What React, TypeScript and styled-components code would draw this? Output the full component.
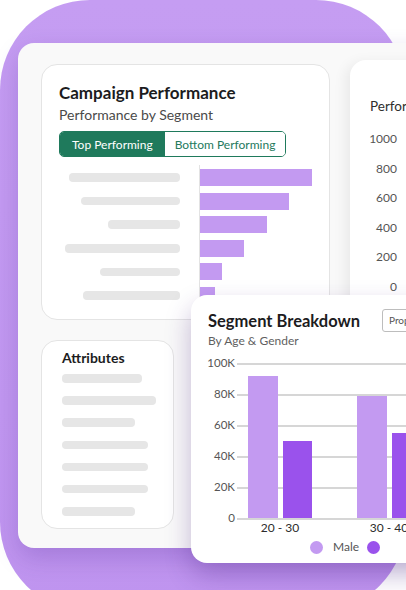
import React from 'react';
import styled, { createGlobalStyle } from 'styled-components';

const GlobalStyle = createGlobalStyle`
  html, body {
    margin: 0;
    padding: 0;
    background: #ffffff;
    overflow: hidden;
  }
  body {
    width: 406px;
    height: 590px;
    font-family: Lato, "Noto Sans", sans-serif;
    color: #1d1d1f;
  }
`;

const topRows = [
  { label: 111, bar: 112 },
  { label: 99, bar: 89 },
  { label: 72, bar: 67 },
  { label: 115, bar: 44 },
  { label: 80, bar: 22 },
  { label: 97, bar: 15 },
];

const attributeLines = [80, 94, 73, 86, 86, 86, 73];

const perfTicks = ['1000', '800', '600', '400', '200', '0'];
const segTicks = ['100K', '80K', '60K', '40K', '20K', '0'];

const groups = [
  { label: '20 - 30', male: 91.5, female: 50 },
  { label: '30 - 40', male: 79, female: 55 },
];

export default function App() {
  return (
    <>
      <GlobalStyle />
      <Backdrop>
        <Board>
          <LeftColumn>
            <CampaignCard>
              <CardTitle>Campaign Performance</CardTitle>
              <CardSubtitle>Performance by Segment</CardSubtitle>
              <Toggle>
                <ToggleOption $active>Top Performing</ToggleOption>
                <ToggleOption>Bottom Performing</ToggleOption>
              </Toggle>
              <RankChart>
                <LabelColumn>
                  {topRows.map((r, i) => (
                    <RankSlot key={i}>
                      <Placeholder style={{ width: r.label }} />
                    </RankSlot>
                  ))}
                </LabelColumn>
                <BarColumn>
                  {topRows.map((r, i) => (
                    <RankBar key={i} style={{ width: r.bar }} />
                  ))}
                </BarColumn>
              </RankChart>
            </CampaignCard>

            <AttributesCard>
              <AttributesTitle>Attributes</AttributesTitle>
              <AttributeList>
                {attributeLines.map((w, i) => (
                  <Placeholder key={i} style={{ width: w }} />
                ))}
              </AttributeList>
            </AttributesCard>
          </LeftColumn>

          <SidePanel>
            <SideTitle>Performance</SideTitle>
            <SideAxis>
              {perfTicks.map((t) => (
                <SideTick key={t}>{t}</SideTick>
              ))}
            </SideAxis>
          </SidePanel>
        </Board>

        <SegmentCard>
          <SegmentHeader>
            <SegmentTitle>Segment Breakdown</SegmentTitle>
            <Dropdown>Property</Dropdown>
          </SegmentHeader>
          <SegmentSubtitle>By Age &amp; Gender</SegmentSubtitle>

          <PlotRow>
            <YAxis>
              {segTicks.map((t) => (
                <YTick key={t}>{t}</YTick>
              ))}
            </YAxis>
            <Plot>
              {groups.map((g) => (
                <BarGroup key={g.label}>
                  <ColumnBar $tone="light" style={{ height: g.male * 1.55 }} />
                  <ColumnBar $tone="dark" style={{ height: g.female * 1.55 }} />
                </BarGroup>
              ))}
            </Plot>
          </PlotRow>

          <XAxis>
            {groups.map((g) => (
              <XTick key={g.label}>{g.label}</XTick>
            ))}
          </XAxis>

          {/* second label sits past the frame edge in the mock */}
          <Legend>
            <LegendDot $tone="light" />
            <LegendText>Male</LegendText>
            <LegendDot $tone="dark" />
          </Legend>
        </SegmentCard>
      </Backdrop>
    </>
  );
}

const LIGHT = '#c39af1';
const DARK = '#9a52ec';

const Backdrop = styled.div`
  position: relative;
  box-sizing: border-box;
  width: 406px;
  height: 612px;
  padding: 43px 0 0 18px;
  border-radius: 90px;
  background: linear-gradient(180deg, #c59df2 0%, #bf94ef 100%);
`

const Board = styled.div`
  box-sizing: border-box;
  display: flex;
  gap: 20px;
  width: 440px;
  height: 505px;
  padding: 21px 0 0 23px;
  border-radius: 16px;
  background: #f9f9f9;
  box-shadow: 0 10px 24px rgba(70, 30, 140, 0.22);
`

const LeftColumn = styled.div`
  display: flex;
  flex-direction: column;
  gap: 20px;
  flex: none;
  width: 289px;
`

const CampaignCard = styled.div`
  box-sizing: border-box;
  height: 256px;
  padding: 18px 17px 0 17px;
  border: 1px solid #e4e4e4;
  border-radius: 16px;
  background: #ffffff;
`

const CardTitle = styled.h2`
  margin: 0;
  font-size: 17px;
  line-height: 20px;
  font-weight: 700;
  color: #1c1c1e;
`

const CardSubtitle = styled.div`
  margin-top: 3px;
  font-size: 14px;
  line-height: 18px;
  color: #4a4a4a;
`

const Toggle = styled.div`
  display: inline-flex;
  margin-top: 7px;
  height: 26px;
  border: 1px solid #1f7a5c;
  border-radius: 5px;
  overflow: hidden;
  box-sizing: border-box;
`

const ToggleOption = styled.div<{ $active?: boolean }>`
  display: flex;
  align-items: center;
  padding: 0 ${(p) => (p.$active ? '12px' : '10px')};
  font-size: 12px;
  background: ${(p) => (p.$active ? '#1f7a5c' : '#ffffff')};
  color: ${(p) => (p.$active ? '#ffffff' : '#257a5d')};
`

const RankChart = styled.div`
  display: flex;
  margin-top: 8px;
`

const LabelColumn = styled.div`
  display: flex;
  flex-direction: column;
  align-items: flex-end;
  gap: 6.6px;
  width: 123px;
  padding-top: 4px;
`

const RankSlot = styled.div`
  display: flex;
  align-items: center;
  height: 17px;
`

const Placeholder = styled.div`
  height: 8.5px;
  border-radius: 4px;
  background: #e6e6e6;
`

const BarColumn = styled.div`
  display: flex;
  flex-direction: column;
  gap: 6.6px;
  margin-left: 19px;
  padding-top: 4px;
  height: 160px;
  border-left: 1px solid #e3e3e3;
`

const RankBar = styled.div`
  height: 17px;
  background: ${LIGHT};
`

const AttributesCard = styled.div`
  box-sizing: border-box;
  width: 133px;
  height: 189px;
  padding: 8px 0 0 20px;
  border: 1px solid #e4e4e4;
  border-radius: 16px;
  background: #ffffff;
`

const AttributesTitle = styled.div`
  font-size: 14px;
  line-height: 18px;
  font-weight: 700;
  color: #1c1c1e;
`

const AttributeList = styled.div`
  display: flex;
  flex-direction: column;
  gap: 13.7px;
  margin-top: 7px;
`

const SidePanel = styled.div`
  flex: 1;
  margin-top: -4px;
  padding: 37px 0 0 20px;
  border-radius: 16px 0 0 0;
  background: #ffffff;
  box-shadow: -4px 3px 14px rgba(0, 0, 0, 0.07);
`

const SideTitle = styled.div`
  font-size: 13.5px;
  line-height: 18px;
  color: #2e2e2e;
`

const SideAxis = styled.div`
  display: flex;
  flex-direction: column;
  align-items: flex-end;
  width: 27px;
  margin-top: 18px;
`

const SideTick = styled.div`
  height: 29.6px;
  font-size: 12px;
  line-height: 12px;
  color: #555555;
`

const SegmentCard = styled.div`
  position: absolute;
  left: 191px;
  top: 295px;
  box-sizing: border-box;
  width: 250px;
  height: 268px;
  padding: 14px 0 0 17px;
  border-radius: 16px;
  background: #ffffff;
  box-shadow: 0 12px 26px rgba(60, 20, 120, 0.28);
`

const SegmentHeader = styled.div`
  display: grid;
  grid-template-columns: 174px auto;
  align-items: center;
`

const SegmentTitle = styled.div`
  font-size: 16.5px;
  line-height: 22px;
  font-weight: 700;
  color: #1c1c1e;
  white-space: nowrap;
`

const Dropdown = styled.div`
  box-sizing: border-box;
  height: 23px;
  padding: 0 6px;
  border: 1px solid #bdbdbd;
  border-radius: 3px;
  font-size: 10px;
  line-height: 21px;
  color: #555555;
  white-space: nowrap;
`

const SegmentSubtitle = styled.div`
  margin-top: 1px;
  font-size: 12px;
  line-height: 16px;
  color: #5f5f5f;
`

const PlotRow = styled.div`
  display: flex;
  align-items: flex-start;
  margin-top: 14px;
`

const YAxis = styled.div`
  display: flex;
  flex-direction: column;
  justify-content: space-between;
  align-items: flex-end;
  width: 27px;
  height: 167px;
  margin-top: -6px;
`

const YTick = styled.div`
  font-size: 11.5px;
  line-height: 12px;
  color: #555555;
`

const Plot = styled.div`
  display: flex;
  align-items: flex-end;
  gap: 45px;
  flex: 1;
  margin-left: 2px;
  padding-left: 11px;
  height: 156.5px;
  background: repeating-linear-gradient(
    to bottom,
    #d6d6d6 0,
    #d6d6d6 1.5px,
    transparent 1.5px,
    transparent 31px
  );
`

const BarGroup = styled.div`
  display: flex;
  align-items: flex-end;
  gap: 5px;
  padding-bottom: 1.5px;
`

const ColumnBar = styled.div<{ $tone: 'light' | 'dark' }>`
  width: 29.5px;
  background: ${(p) => (p.$tone === 'light' ? LIGHT : DARK)};
`

const XAxis = styled.div`
  display: flex;
  gap: 45px;
  padding-left: 40px;
  margin-top: -3px;
`

const XTick = styled.div`
  width: 64px;
  text-align: center;
  font-size: 12px;
  line-height: 14px;
  color: #2c2c2c;
  white-space: nowrap;
`

const Legend = styled.div`
  display: flex;
  align-items: center;
  margin-top: 4px;
  padding-left: 102px;
`

const LegendDot = styled.span<{ $tone: 'light' | 'dark' }>`
  flex: none;
  width: 13px;
  height: 13px;
  border-radius: 50%;
  background: ${(p) => (p.$tone === 'light' ? LIGHT : DARK)};
  margin-right: 10px;
`

const LegendText = styled.span`
  font-size: 12px;
  line-height: 16px;
  color: #555555;
  margin-right: 8px;
`
